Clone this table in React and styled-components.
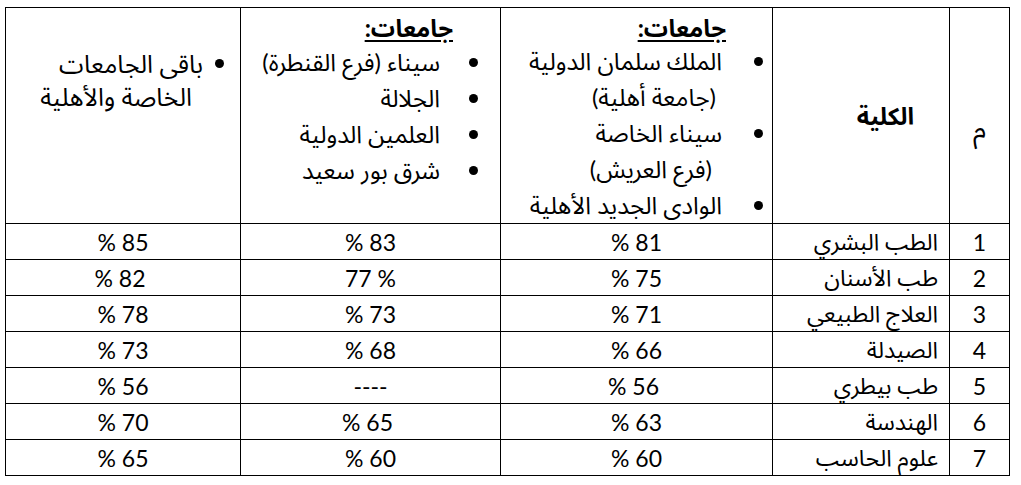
import React from "react";
import styled, { createGlobalStyle } from "styled-components";

const Global = createGlobalStyle`
  html, body { margin: 0; padding: 0; background: #ffffff; }
  body { font-family: Lato, "Noto Sans Arabic", "Noto Naskh Arabic", "DejaVu Sans", sans-serif; color: #000; }
`;

const Table = styled.table`
  margin: 7px 0 0 5px;
  border-collapse: collapse;
  table-layout: fixed;
  width: 1005px;
  direction: rtl;
  font-family: Lato, "Noto Sans Arabic", "Noto Naskh Arabic", "DejaVu Sans", sans-serif;
  font-size: 24px;
  color: #000;
`;

const Cell = styled.td`
  border: 1px solid #000;
  padding: 0;
  vertical-align: ${(p) => p.$valign || "middle"};
  text-align: ${(p) => p.$align || "center"};
  padding-right: ${(p) => p.$pr || 0}px;
  padding-top: ${(p) => p.$pt || 0}px;
  font-size: ${(p) => p.$fs || 24}px;
  line-height: 1;
  white-space: nowrap;
`;

const HeadRow = styled.tr`
  height: 215px;
`;

const BodyRow = styled.tr`
  height: 36px;
`;

const HeadTitle = styled.div`
  font-weight: 700;
  text-decoration: underline;
  text-underline-offset: 3px;
  text-decoration-thickness: 1.5px;
  padding-right: ${(p) => p.$pr}px;
  line-height: 34px;
  margin-top: 3px;
`;

const List = styled.ul`
  list-style: none;
  margin: ${(p) => p.$mt || 0}px 0 0 0;
  padding: 0;
  display: flex;
  flex-direction: column;
`;

const Item = styled.li`
  display: flex;
  align-items: flex-start;
  padding-right: ${(p) => p.$br}px;
`;

const BulletBox = styled.span`
  flex: none;
  height: ${(p) => p.$lh}px;
  display: flex;
  align-items: center;
  margin-left: ${(p) => p.$gap}px;
`;

const Bullet = styled.span`
  width: 9px;
  height: 9px;
  border-radius: 50%;
  background: #000;
`;

const ItemText = styled.span`
  display: flex;
  flex-direction: column;
  align-items: flex-start;
  font-size: ${(p) => p.$fs || 24}px;
`;

const Line = styled.span`
  display: block;
  line-height: ${(p) => p.$lh}px;
  padding-right: ${(p) => p.$indent || 0}px;
`;

const Bold = styled.span`
  font-weight: 700;
`;

const Num = styled.span`
  direction: ltr;
  unicode-bidi: isolate;
  display: inline-block;
  font-size: 23px;
`;

const rows = [
  ["1", "الطب البشري", "% 81", "% 83", "% 85"],
  ["2", "طب الأسنان", "% 75", "77 %", "% 82\u00a0"],
  ["3", "العلاج الطبيعي", "% 71", "% 73", "% 78"],
  ["4", "الصيدلة", "% 66", "% 68", "% 73"],
  ["5", "طب بيطري", "% 56\u00a0", "----", "% 56"],
  ["6", "الهندسة", "% 63", "% 65\u00a0", "% 70"],
  ["7", "علوم الحاسب", "% 60", "% 60", "% 65"],
];

const col1Items = [
  [["الملك سلمان الدولية", 0], ["(جامعة أهلية)", 6]],
  [["سيناء الخاصة", 0], ["(فرع العريش)", 10]],
  [["الوادى الجديد الأهلية", 0]],
];

const col2Items = [
  [["سيناء (فرع القنطرة)", 0]],
  [["الجلالة", 0]],
  [["العلمين الدولية", 0]],
  [["شرق بور سعيد", 0]],
];

const col3Items = [
  [["باقى الجامعات", 0], ["الخاصة والأهلية", 11]],
];

function BulletList({ items, br, gap, lh, mt, fs }) {
  return (
    <List $mt={mt}>
      {items.map((lines, i) => (
        <Item key={i} $br={br}>
          <BulletBox $gap={gap} $lh={lh}>
            <Bullet />
          </BulletBox>
          <ItemText $fs={fs}>
            {lines.map(([t, ind], j) => (
              <Line key={j} $lh={lh} $indent={ind}>
                {t}
              </Line>
            ))}
          </ItemText>
        </Item>
      ))}
    </List>
  );
}

export default function App() {
  return (
    <>
      <Global />
      <Table>
        <colgroup>
          <col style={{ width: 60 }} />
          <col style={{ width: 177 }} />
          <col style={{ width: 272 }} />
          <col style={{ width: 260 }} />
          <col style={{ width: 235 }} />
        </colgroup>
        <tbody>
          <HeadRow>
            <Cell $pt={26} $fs={27}>
              م
            </Cell>
            <Cell $align="right" $pr={35} $fs={24}>
              <Bold>الكلية</Bold>
            </Cell>
            <Cell $valign="top" $align="right">
              <HeadTitle $pr={46}>جامعات:</HeadTitle>
              <BulletList items={col1Items} br={9} gap={32} lh={36} mt={-2} fs={24} />
            </Cell>
            <Cell $valign="top" $align="right">
              <HeadTitle $pr={47}>جامعات:</HeadTitle>
              <BulletList items={col2Items} br={22} gap={29} lh={36} mt={-1} fs={24} />
            </Cell>
            <Cell $valign="top" $align="right">
              <BulletList items={col3Items} br={16} gap={12} lh={33} mt={39} fs={25} />
            </Cell>
          </HeadRow>
          {rows.map((r) => (
            <BodyRow key={r[0]}>
              <Cell>
                <Num>{r[0]}</Num>
              </Cell>
              <Cell $align="right" $pr={11} $fs={23}>
                {r[1]}
              </Cell>
              <Cell>
                <Num>{r[2]}</Num>
              </Cell>
              <Cell>
                <Num>{r[3]}</Num>
              </Cell>
              <Cell>
                <Num>{r[4]}</Num>
              </Cell>
            </BodyRow>
          ))}
        </tbody>
      </Table>
    </>
  );
}
